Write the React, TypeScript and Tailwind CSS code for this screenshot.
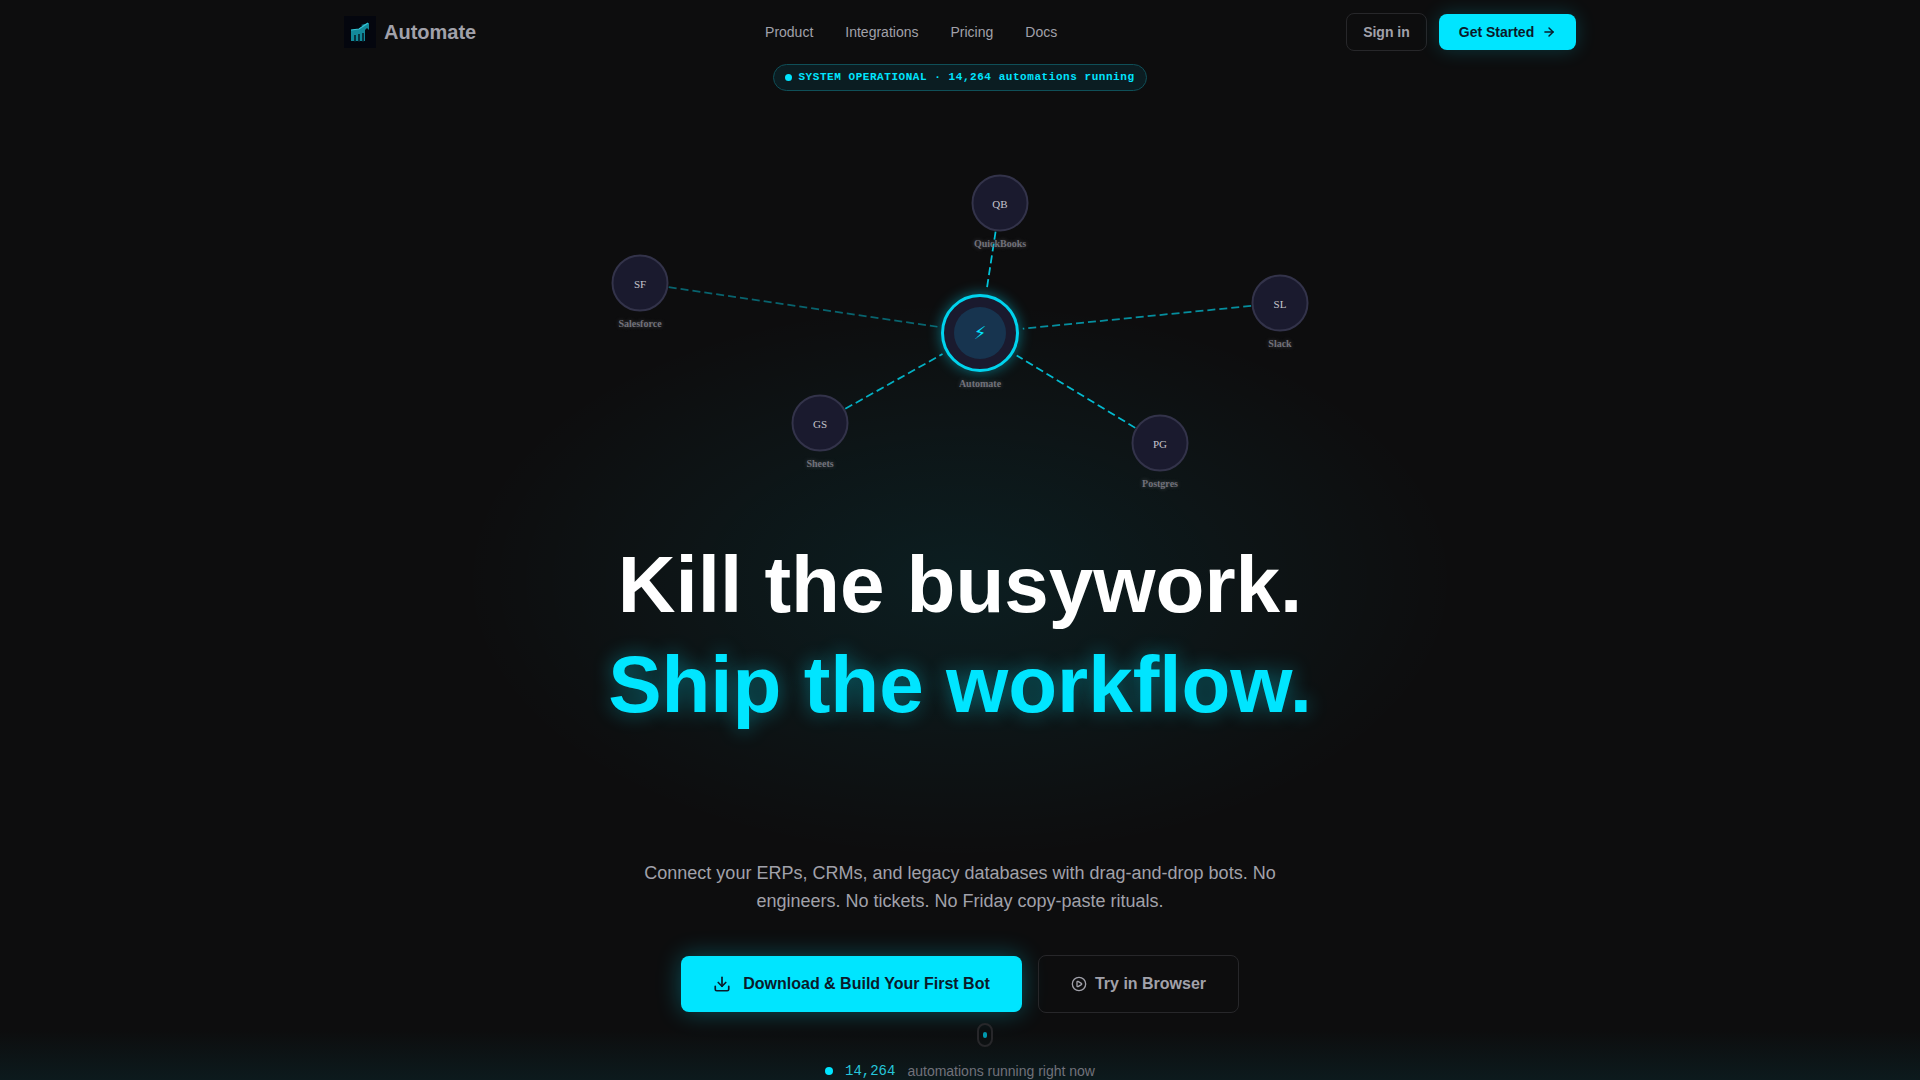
import { ArrowRight, CirclePlay, Download } from 'lucide-react';

const NAV_LINKS = ['Product', 'Integrations', 'Pricing', 'Docs'];

// Centre of the hub inside the 800x440 diagram
const HUB = { x: 420, y: 242 };

const NODES = [
  { code: 'QB', name: 'QuickBooks', x: 440, y: 112, opacity: 0.85 },
  { code: 'SF', name: 'Salesforce', x: 80, y: 192, opacity: 0.4 },
  { code: 'SL', name: 'Slack', x: 720, y: 212, opacity: 0.6 },
  { code: 'GS', name: 'Sheets', x: 260, y: 332, opacity: 0.75 },
  { code: 'PG', name: 'Postgres', x: 600, y: 352, opacity: 0.8 },
];

function edge(x: number, y: number) {
  const dx = HUB.x - x;
  const dy = HUB.y - y;
  const len = Math.hypot(dx, dy);
  return {
    x1: x + (dx / len) * 29,
    y1: y + (dy / len) * 29,
    x2: HUB.x - (dx / len) * 43,
    y2: HUB.y - (dy / len) * 43,
  };
}

function Logo() {
  return (
    <div className="flex h-8 w-8 items-center justify-center bg-[#04060e]">
      <svg width="24" height="24" viewBox="0 0 24 24" fill="none">
        <path d="M3 10l8-1 4-3-2-1 8-2v7l-2-2-2 2v11H3z" fill="#13899a" />
        <path d="M7 22v-7M11 22v-8M15 22v-9" stroke="#06202b" strokeWidth="1.6" />
        <path d="M3 10l8-1 9-6" stroke="#35c6d8" strokeWidth="1.2" />
      </svg>
    </div>
  );
}

export default function App() {
  return (
    <div className="relative h-screen w-full overflow-hidden bg-[#0d0d0e] font-['Liberation_Sans',Arial,sans-serif] text-white">
      <div className="pointer-events-none absolute left-[460px] top-[300px] h-[560px] w-[1000px] bg-[radial-gradient(ellipse_closest-side,rgba(0,229,255,0.08),transparent)]" />
      <div className="pointer-events-none absolute inset-x-0 bottom-0 h-[50px] bg-gradient-to-t from-[#0c1a1d] to-transparent" />

      <div className="relative">
        <header className="mx-auto flex h-16 max-w-7xl items-center justify-between px-6">
          <div className="flex items-center gap-2">
            <Logo />
            <span className="text-xl font-semibold text-[#a1a1aa]">Automate</span>
          </div>
          <nav className="flex items-center gap-8">
            {NAV_LINKS.map(link => (
              <a key={link} className="text-sm text-[#a1a1aa]">
                {link}
              </a>
            ))}
          </nav>
          <div className="flex items-center gap-3">
            <button className="h-[38px] w-[81px] rounded-lg border border-[#27272a] text-sm font-semibold text-[#a1a1aa]">
              Sign in
            </button>
            <button className="flex h-9 w-[137px] items-center justify-center gap-2 rounded-lg bg-[#00e5ff] text-sm font-semibold text-[#0a1a2a] shadow-[0_0_20px_rgba(0,229,255,0.2)]">
              Get Started
              <ArrowRight size={14} strokeWidth={2.5} />
            </button>
          </div>
        </header>

        <div className="flex justify-center">
          <div className="flex h-[27px] w-[374px] items-center justify-center gap-1.5 rounded-full border border-[#0f4f58] bg-[#0b1d22] font-['Liberation_Mono',monospace] text-[11px] font-bold tracking-[0.55px] text-[#00e5ff]">
            <span className="h-[7px] w-[7px] rounded-full bg-[#00e5ff]" />
            SYSTEM OPERATIONAL · 14,264 automations running
          </div>
        </div>

        {/* Integration diagram */}
        <div className="relative mx-auto h-[444px] w-[800px] font-['Liberation_Serif',serif]">
          <svg className="absolute inset-0" width="800" height="443" fill="none">
            {NODES.map(n => (
              <line
                key={n.code}
                {...edge(n.x, n.y)}
                stroke="#00e5ff"
                strokeOpacity={n.opacity}
                strokeWidth="1.75"
                strokeDasharray="8 4"
              />
            ))}
          </svg>

          {NODES.map(n => (
            <div
              key={n.code}
              className="absolute flex h-[57px] w-[57px] -translate-x-1/2 -translate-y-1/2 items-center justify-center rounded-full border-2 border-[#33334a] bg-[#1a1a2e] pt-0.5 text-[11px] text-[#c4c4cc]"
              style={{ left: n.x, top: n.y }}
            >
              {n.code}
              <span className="absolute left-1/2 top-[59px] -translate-x-1/2 whitespace-nowrap text-[10px] font-bold text-[#71717a] [text-shadow:0_0_4px_rgba(161,161,170,0.4)]">
                {n.name}
              </span>
            </div>
          ))}

          <div
            className="absolute flex h-[78px] w-[78px] -translate-x-1/2 -translate-y-1/2 items-center justify-center rounded-full border-[3px] border-[#00d4ee] bg-[#1a1a2e] shadow-[0_0_14px_rgba(0,229,255,0.45)]"
            style={{ left: HUB.x, top: HUB.y }}
          >
            <div className="flex h-[52px] w-[52px] items-center justify-center rounded-full bg-[#17344f] font-['DejaVu_Sans',sans-serif] text-lg text-[#00e5ff]">
              ⚡
            </div>
            <span className="absolute left-1/2 top-[79px] -translate-x-1/2 whitespace-nowrap font-['Liberation_Serif',serif] text-[10px] font-bold text-[#71717a] [text-shadow:0_0_4px_rgba(161,161,170,0.4)]">
              Automate
            </span>
          </div>
        </div>

        <h1 className="text-center text-[80px] font-bold leading-[100px]">
          <span className="block">Kill the busywork.</span>
          <span className="block text-[#00e5ff] [text-shadow:0_0_20px_rgba(0,229,255,0.4)]">Ship the workflow.</span>
        </h1>

        <p className="mx-auto mt-[124px] max-w-2xl text-center text-lg leading-7 text-[#a1a1aa]">
          Connect your ERPs, CRMs, and legacy databases with drag-and-drop bots. No engineers. No tickets. No Friday
          copy-paste rituals.
        </p>

        <div className="mt-10 flex items-center justify-center gap-4">
          <button className="flex h-14 w-[341px] items-center justify-center gap-3 rounded-lg bg-[#00e5ff] text-base font-bold text-[#0a1a2a] shadow-[0_0_24px_rgba(0,229,255,0.3)]">
            <Download size={18} strokeWidth={2.25} />
            Download &amp; Build Your First Bot
          </button>
          <button className="flex h-[58px] w-[201px] items-center justify-center gap-2 rounded-lg border border-[#27272a] text-base font-bold text-[#a1a1aa]">
            <CirclePlay size={16} />
            Try in Browser
          </button>
        </div>
      </div>

      {/* Scroll hint */}
      <div className="absolute left-[977px] top-[1023px] flex h-6 w-4 justify-center rounded-full border-2 border-[#27272a] pt-[7px]">
        <span className="h-1.5 w-1 rounded-full bg-[#0098ad]" />
      </div>

      <div className="absolute inset-x-0 top-[1061px] flex items-center justify-center gap-3 text-sm">
        <span className="h-2 w-2 rounded-full bg-[#00e5ff]" />
        <span className="font-['Liberation_Mono',monospace] text-[#26c6da]">14,264</span>
        <span className="text-[#71717a]">automations running right now</span>
      </div>
    </div>
  );
}
